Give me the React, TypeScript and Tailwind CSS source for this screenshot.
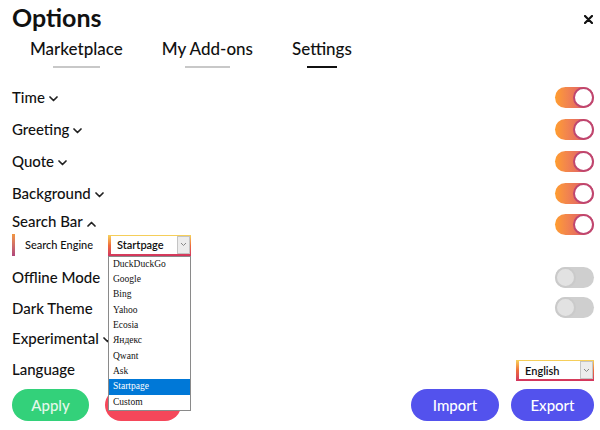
import React from "react";

const Chevron = ({ up }: { up?: boolean }) => (
  <svg width="9" height="6" viewBox="0 0 9 6" className="ml-[4px] mt-[4px]">
    <path
      d={up ? "M1 5 L4.5 1.5 L8 5" : "M1 1 L4.5 4.5 L8 1"}
      fill="none"
      stroke="#222"
      strokeWidth="1.7"
      strokeLinecap="round"
      strokeLinejoin="round"
    />
  </svg>
);

const Toggle = ({ on, className = "" }: { on?: boolean; className?: string }) =>
  on ? (
    <div className={"w-[39px] h-[21px] rounded-full bg-linear-to-r from-[#ff9d2c] to-[#d4486e] flex justify-end " + className}>
      <div className="w-[21px] h-[21px] rounded-full bg-white border-2 border-[#bf466f]" />
    </div>
  ) : (
    <div className={"w-[39px] h-[21px] rounded-full bg-[#cfcfcf] flex justify-start " + className}>
      <div className="w-[21px] h-[21px] rounded-full bg-[#e2e2e2] border-2 border-[#cacaca]" />
    </div>
  );

const Select = ({ value, className = "" }: { value: string; className?: string }) => (
  <div className={"h-[21px] bg-linear-to-b from-[#f5d35c] via-[#ee6b3a] to-[#d2335e] pl-[3px] pt-px pr-px pb-[2px] " + className}>
    <div className="h-full bg-white flex items-center justify-between">
      <span className="pl-[6px] text-[11px] font-semibold text-[#111] leading-none">{value}</span>
      <div className="h-full w-[13px] bg-[#ececec] border border-[#c4c4c4] flex items-center justify-center">
        <svg width="7" height="5" viewBox="0 0 7 5">
          <path d="M1 1 L3.5 3.5 L6 1" fill="none" stroke="#888" strokeWidth="1" />
        </svg>
      </div>
    </div>
  </div>
);

const Row = ({ label, chevron, up, toggle, on, h = "h-[32px]" }: { label: string; chevron?: boolean; up?: boolean; toggle?: boolean; on?: boolean; h?: string }) => (
  <div className={"flex items-center justify-between " + h}>
    <div className="flex items-center text-[15px] font-medium text-[#111]">
      <span>{label}</span>
      {chevron && <Chevron up={up} />}
    </div>
    {toggle && <Toggle on={on} />}
  </div>
);

const engines = ["DuckDuckGo", "Google", "Bing", "Yahoo", "Ecosia", "Яндекс", "Qwant", "Ask", "Startpage", "Custom"];

export default function App() {
  return (
    <div className="relative w-[600px] h-[430px] overflow-hidden bg-white pl-3 pr-[6px]" style={{ fontFamily: "Lato, 'Noto Sans', sans-serif" }}>
      {/* header */}
      <div className="flex justify-between pt-[2px] h-[32px]">
        <div className="text-[25px] leading-[30px] font-bold text-[#111]">Options</div>
        <svg width="9" height="9" viewBox="0 0 9 9" className="mt-[13px] mr-[1px]">
          <path d="M1 1 L8 8 M8 1 L1 8" stroke="#111" strokeWidth="2.2" strokeLinecap="round" />
        </svg>
      </div>
      {/* tabs */}
      <div className="flex gap-[39px] pl-[18px] mt-[7px]">
        {[
          { t: "Marketplace", a: false },
          { t: "My Add-ons", a: false },
          { t: "Settings", a: true },
        ].map((x) => (
          <div key={x.t} className="flex flex-col items-center">
            <div className="text-[17px] leading-[20px] font-medium text-[#111]">{x.t}</div>
            <div className={"mt-[7px] w-1/2 " + (x.a ? "h-[2px] bg-[#111]" : "h-[2px] bg-[#c8c8c8]")} />
          </div>
        ))}
      </div>
      {/* rows */}
      <div className="mt-[13px] flex flex-col">
        <Row label="Time" chevron toggle on />
        <Row label="Greeting" chevron toggle on />
        <Row label="Quote" chevron toggle on />
        <Row label="Background" chevron toggle on />
        <div className="flex items-center justify-between h-[25px]">
          <div className="flex items-center text-[15px] font-medium text-[#111]">
            <span>Search Bar</span>
            <Chevron up />
          </div>
          <Toggle on className="translate-y-[3px]" />
        </div>
        <div className="flex items-center h-[22px]">
          <div className="w-[3px] h-full bg-linear-to-b from-[#f2963e] to-[#b0467a]" />
          <span className="ml-[10px] text-[11px] font-medium text-[#111] w-[83px]">Search Engine</span>
          <Select value="Startpage" className="w-[83px]" />
        </div>
        <div className="h-[6px]" />
        <Row label="Offline Mode" toggle h="h-[30.5px]" />
        <Row label="Dark Theme" toggle h="h-[30.5px]" />
        <Row label="Experimental" chevron h="h-[30.5px]" />
        <div className="flex items-center justify-between h-[30.5px]">
          <span className="text-[15px] font-medium text-[#111]">Language</span>
          <Select value="English" className="w-[78px] translate-y-[2px]" />
        </div>
        <div className="flex justify-between mt-[5px]">
          <div className="flex gap-[16px]">
            <button className="w-[77px] h-[32px] rounded-full bg-[#33d17a] text-[#e3f8ea] text-[15px] font-medium">Apply</button>
            <button className="w-[76px] h-[32px] rounded-full bg-[#f5475a] text-white text-[15px] font-medium">Reset</button>
          </div>
          <div className="flex gap-[12px]">
            <button className="w-[88px] h-[32px] rounded-full bg-[#5352ed] text-white text-[15px] font-medium">Import</button>
            <button className="w-[83px] h-[32px] rounded-full bg-[#5352ed] text-white text-[15px] font-medium">Export</button>
          </div>
        </div>
      </div>
      {/* open dropdown */}
      <div className="absolute left-[108px] top-[256px] w-[83px] border border-[#8a8a8a] bg-white flex flex-col" style={{ fontFamily: "'Liberation Serif', serif" }}>
        {engines.map((e) => (
          <div
            key={e}
            className={"h-[15.3px] flex items-center pl-[4px] text-[9.5px] leading-none " + (e === "Startpage" ? "bg-[#0078d7] text-white" : "text-[#111]")}
          >
            {e}
          </div>
        ))}
      </div>
    </div>
  );
}
